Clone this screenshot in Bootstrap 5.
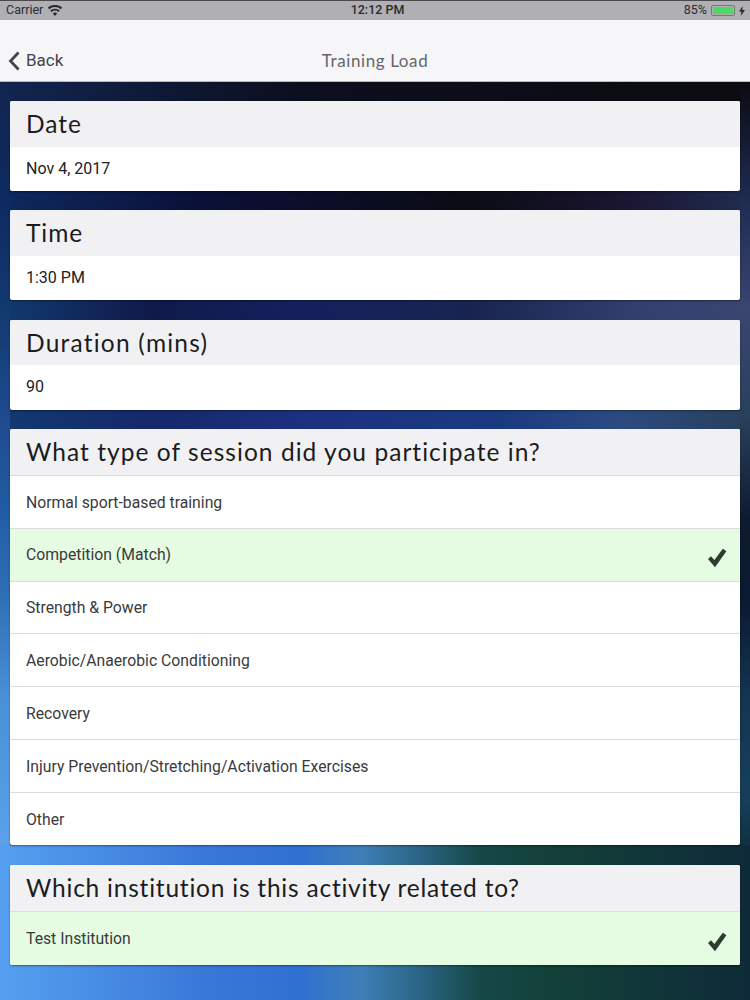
<!DOCTYPE html>
<html lang="en">
<head>
  <meta charset="UTF-8" />
  <meta name="viewport" content="width=device-width, initial-scale=1.0"/>
  <title>Training Load</title>
  <link href="https://cdn.jsdelivr.net/npm/bootstrap@5.3.0/dist/css/bootstrap.min.css" rel="stylesheet">
  <style>
    html, body { height: 1000px; overflow: hidden; }
    body { font-family: Roboto, "Liberation Sans", sans-serif; color: #222; background: #0b1a3a; }
    .status-strip { height: 20px; background: #b0b0b4; border-top: 1px solid #4a4a4e; font-size: 12.5px; color: #2b2b2e; padding: 0 5px 0 6px; }
    .status-time { font-weight: 500; margin-left: 4px; }
    .status-side { width: 120px; }
    .top-bar { height: 62px; background: #f6f6f8; border-bottom: 1px solid #b9bcc4; padding: 21px 8px 0; font-size: 17px; }
    .back-link { color: #44444a; width: 120px; gap: 6px; }
    .top-title { color: #66666a; font-family: Lato, sans-serif; letter-spacing: .6px; }
    .top-gap { width: 120px; }
    .batt { width: 24px; height: 11px; border: 1px solid #77777b; border-radius: 2px; padding: 1px; }
    .batt-fill { height: 100%; background: #4cd964; }
    .scene {
      height: 918px; padding: 19px 10px 0; gap: 19.3px;
      background-repeat: no-repeat;
      background-image:
        linear-gradient(180deg, #122550 0, #0d2a60 118px, #123a70 228px, #1f4a90 338px, #1f5aa0 418px, #3070b8 518px, #4a90d8 618px, #5aa0ea 763px),
        linear-gradient(180deg, #0b0b12 0, #1f2c50 118px, #3a4570 228px, #28405a 338px, #0e1a30 438px, #0a1a30 518px, #153550 618px, #15405a 718px, #103040 763px),
        linear-gradient(90deg, #55a0f0 0, #3a78d8 200px, #3070d0 300px, #3f7fb8 360px, #2a6585 420px, #164848 480px, #124038 560px, #0e2a38 750px),
        linear-gradient(90deg, #123a70 0, #15286a 150px, #1c3080 300px, #1a3a80 500px, #2c4a80 620px, #28405a 750px),
        linear-gradient(90deg, #123a70 0, #0f1a4a 150px, #14205e 300px, #18244f 470px, #33406f 640px, #3a4570 750px),
        linear-gradient(90deg, #0d2a60 0, #0a1038 200px, #0a0c14 470px, #1a1530 620px, #1f2c50 750px),
        linear-gradient(90deg, #122550 0, #0b0e1e 300px, #0b0b10 750px);
      background-size: 10px 763px, 10px 763px, 100% 155px, 100% 480px, 100% 110px, 100% 110px, 100% 60px;
      background-position: 0 0, 100% 0, 0 100%, 0 280px, 0 170px, 0 60px, 0 0;
    }
    .pane { border-radius: 2px; overflow: hidden; background: #fff; box-shadow: 0 1px 2px rgba(0,0,0,.4); }
    .pane-last { margin-top: .7px; }
    .pane-head { height: 45.5px; background: #f1f1f3; padding: 0 16px; font-family: Lato, sans-serif; font-size: 24.5px; letter-spacing: .95px; color: #1c1c1e; line-height: 46px; }
    .head-wide { letter-spacing: 1.22px; }
    .head-mid { height: 46px; letter-spacing: 1.05px; }
    .head-tight { height: 46px; letter-spacing: .78px; }
    .pane-val { height: 44.5px; padding: 0 16px; font-size: 16px; line-height: 44px; color: #222; }
    .opt { height: 52.85px; padding: 1px 16px 0; font-size: 15.75px; border-top: 1px solid #dcdcdc; color: #3a3a3c; }
    .opt-last { height: 54px; }
    .opt-on { background: #e6fce2; }
    .opt-on svg { margin: 6px -3px 0 0; }
  </style>
</head>
<body>
  <div class="status-strip d-flex align-items-center justify-content-between">
    <div class="status-side d-flex align-items-center gap-1">
      <span>Carrier</span>
      <svg width="16" height="12" viewBox="0 0 16 12"><path d="M8 11 5.8 8.4a3.3 3.3 0 0 1 4.4 0Z M4.6 7 3.2 5.4a7.4 7.4 0 0 1 9.6 0L11.4 7a5.2 5.2 0 0 0-6.8 0Z M2.2 4.2.8 2.6a11 11 0 0 1 14.4 0l-1.4 1.6a8.8 8.8 0 0 0-11.6 0Z" fill="#2b2b2e"/></svg>
    </div>
    <span class="status-time">12:12 PM</span>
    <div class="status-side d-flex align-items-center justify-content-end gap-1">
      <span>85%</span>
      <div class="batt"><div class="batt-fill"></div></div>
      <svg width="6" height="10" viewBox="0 0 6 10"><path d="M3.6 0 0 5.6h2.4L1.8 10 6 4H3.4Z" fill="#2b2b2e"/></svg>
    </div>
  </div>
  <div class="top-bar d-flex align-items-center justify-content-between">
    <div class="back-link d-flex align-items-center">
      <svg width="12" height="20" viewBox="0 0 12 20"><path d="M10.5 1.5 2.5 10l8 8.5" fill="none" stroke="#44444a" stroke-width="2.8"/></svg>
      <span>Back</span>
    </div>
    <div class="top-title">Training Load</div>
    <div class="top-gap"></div>
  </div>
  <div class="scene d-flex flex-column">
    <div class="pane">
      <div class="pane-head">Date</div>
      <div class="pane-val">Nov 4, 2017</div>
    </div>
    <div class="pane">
      <div class="pane-head">Time</div>
      <div class="pane-val">1:30 PM</div>
    </div>
    <div class="pane">
      <div class="pane-head head-wide">Duration (mins)</div>
      <div class="pane-val">90</div>
    </div>
    <div class="pane">
      <div class="pane-head head-mid">What type of session did you participate in?</div>
      <div class="opt d-flex align-items-center">Normal sport-based training</div>
      <div class="opt opt-on d-flex align-items-center justify-content-between">
        <span>Competition (Match)</span>
        <svg width="20" height="20" viewBox="0 0 20 18" preserveAspectRatio="none"><path d="M1 10 4 7.4l3.4 3.4L15.8.6 19.4 3 8 17.4Z" fill="#2f3a30"/></svg>
      </div>
      <div class="opt d-flex align-items-center">Strength &amp; Power</div>
      <div class="opt d-flex align-items-center">Aerobic/Anaerobic Conditioning</div>
      <div class="opt d-flex align-items-center">Recovery</div>
      <div class="opt d-flex align-items-center">Injury Prevention/Stretching/Activation Exercises</div>
      <div class="opt d-flex align-items-center">Other</div>
    </div>
    <div class="pane pane-last">
      <div class="pane-head head-tight">Which institution is this activity related to?</div>
      <div class="opt opt-last opt-on d-flex align-items-center justify-content-between">
        <span>Test Institution</span>
        <svg width="20" height="20" viewBox="0 0 20 18" preserveAspectRatio="none"><path d="M1 10 4 7.4l3.4 3.4L15.8.6 19.4 3 8 17.4Z" fill="#2f3a30"/></svg>
      </div>
    </div>
  </div>
  <script src="https://cdn.jsdelivr.net/npm/bootstrap@5.3.0/dist/js/bootstrap.bundle.min.js"></script>
</body>
</html>
